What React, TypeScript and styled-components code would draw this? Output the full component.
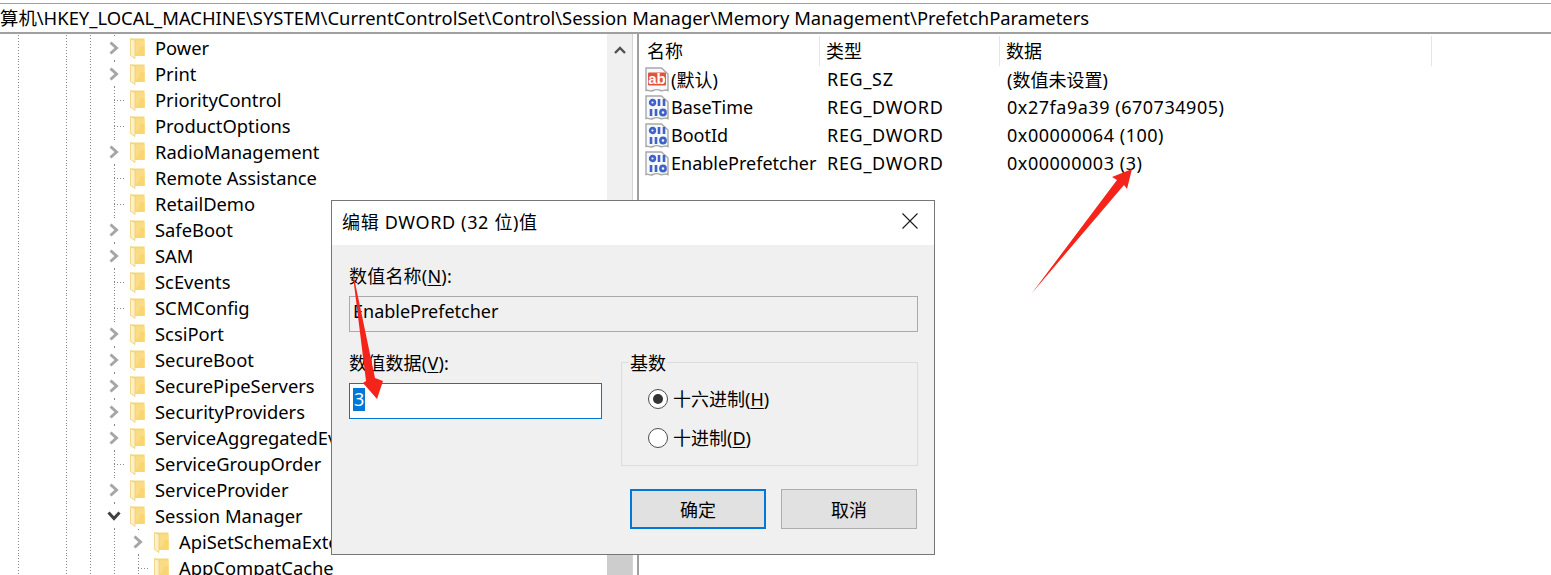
import React from "react";
import styled, { createGlobalStyle } from "styled-components";

const GlobalStyle = createGlobalStyle`
  html, body {
    margin: 0;
    padding: 0;
    background: #fff;
    overflow: hidden;
  }
  * { box-sizing: border-box; }
`;

const FONT = `"Noto Sans", "Noto Sans CJK SC", sans-serif`;

const Page = styled.div`
  position: relative;
  width: 1551px;
  height: 575px;
  overflow: hidden;
  font-family: ${FONT};
  font-size: 18px;
  color: #000;
  background: #fff;
  display: flex;
  flex-direction: column;
`;

const AddressBar = styled.div`
  height: 31px;
  margin-top: 3px;
  flex: none;
  border-top: 1px solid #a0a0a0;
  border-bottom: 2px solid #a0a0a0;
  white-space: nowrap;
  line-height: 28px;
  font-size: 18.4px;
  overflow: hidden;
`;

const Panes = styled.div`
  flex: 1;
  min-height: 0;
  display: flex;
`;

const TreePane = styled.div`
  width: 632px;
  flex: none;
  display: flex;
  overflow: hidden;
`;

const TreeList = styled.div`
  width: 607px;
  flex: none;
  padding-top: 1px;
`;

const Row = styled.div`
  height: 26px;
  display: flex;
  align-items: center;
  white-space: nowrap;
`;

const Guide = styled.div<{ $w: number }>`
  width: ${(p) => p.$w}px;
  height: 100%;
  flex: none;
  background-image: repeating-linear-gradient(to bottom, #8a8a8a 0 1px, transparent 1px 3px);
  background-size: 1px 100%;
  background-repeat: no-repeat;
`;

const Spacer = styled.div<{ $w: number }>`
  width: ${(p) => p.$w}px;
  height: 100%;
  flex: none;
`;

const Twig = styled.div<{ $line: boolean }>`
  width: 16px;
  height: 100%;
  flex: none;
  display: flex;
  align-items: center;
  background-image: ${(p) =>
    p.$line
      ? `repeating-linear-gradient(to bottom, #8a8a8a 0 1px, transparent 1px 3px), repeating-linear-gradient(to right, #8a8a8a 0 1px, transparent 1px 3px)`
      : `linear-gradient(#8a8a8a, #8a8a8a), linear-gradient(#8a8a8a, #8a8a8a)`};
  background-size: ${(p) => (p.$line ? "1px 100%, 11px 1px" : "1px 1px, 1px 1px")};
  background-position: ${(p) => (p.$line ? "0 0, 0 50%" : "0 0, 0 100%")};
  background-repeat: no-repeat;
`;

const ChevronSlot = styled.div`
  width: 24px;
  height: 100%;
  margin-left: -12px;
  flex: none;
  display: flex;
  align-items: center;
  justify-content: center;
`;

const FolderSlot = styled.div`
  width: 25px;
  flex: none;
  display: flex;
  align-items: center;
`;

const TreeLabel = styled.span`
  line-height: 26px;
  font-size: 18.35px;
`;

const ScrollTrack = styled.div`
  width: 25px;
  flex: none;
  background: #f0f0f0;
  display: flex;
  flex-direction: column;
  align-items: center;
  justify-content: space-between;
`;

const ScrollUp = styled.div`
  height: 32px;
  display: flex;
  align-items: center;
`;

const ScrollThumb = styled.div`
  width: 100%;
  height: 20px;
  background: #cdcdcd;
`;

const Splitter = styled.div`
  width: 7px;
  flex: none;
  border-left: 1px solid #d4d4d4;
  border-right: 2px solid #a0a0a0;
`;

const ListPane = styled.div`
  flex: 1;
  min-width: 0;
`;

const ListHeader = styled.div`
  height: 31px;
  padding-top: 2px;
  display: grid;
  grid-template-columns: 181px 180px 432px;
  width: 793px;
`;

const HeaderCell = styled.div`
  padding-left: 8px;
  line-height: 30px;
  border-right: 1px solid #e5e5e5;
  &:nth-child(2), &:nth-child(3) { padding-left: 6px; }
`;

const ListRow = styled.div`
  height: 28px;
  display: grid;
  grid-template-columns: 181px 180px 1fr;
  align-items: center;
  white-space: nowrap;
`;

const NameCell = styled.div`
  display: flex;
  align-items: center;
  gap: 2px;
  padding-left: 6px;
`;

const TypeCell = styled.div`
  padding-left: 7px;
  letter-spacing: 0.7px;
`;

const DataCell = styled.div<{ $plain?: boolean }>`
  padding-left: 7px;
  letter-spacing: ${(p) => (p.$plain ? 0 : "0.53px")};
`;

const Dialog = styled.div`
  position: absolute;
  left: 331px;
  top: 200px;
  width: 604px;
  height: 355px;
  border: 1px solid #767676;
  background: #f0f0f0;
  display: flex;
  flex-direction: column;
`;

const TitleBar = styled.div`
  height: 44px;
  flex: none;
  background: #fff;
  display: flex;
  align-items: center;
  justify-content: space-between;
  padding: 0 16px 4px 10px;
  letter-spacing: 0.65px;
`;

const Body = styled.div`
  padding: 21px 16px 0 17px;
`;

const FieldLabel = styled.div`
  height: 20px;
  line-height: 20px;
  margin-bottom: 10px;
  letter-spacing: 0.2px;
`;

const NameField = styled.div`
  height: 36px;
  border: 1px solid #a9a9a9;
  line-height: 28px;
  padding-left: 3px;
`;

const Lower = styled.div`
  display: grid;
  grid-template-columns: 253px 297px;
  gap: 19px;
  margin-top: 21px;
`;

const ValueColumn = styled.div``;

const ValueInput = styled.div`
  height: 36px;
  border: 1px solid #0078d7;
  background: #fff;
  padding: 3px 0 0 3px;
`;

const Selection = styled.span`
  display: inline-block;
  background: #0078d7;
  color: #fff;
  height: 23px;
  line-height: 23px;
  padding: 0 1px;
`;

const BaseGroup = styled.div`
  position: relative;
  margin-top: 9px;
  height: 104px;
  border: 1px solid #dcdcdc;
  padding: 26px 0 0 26px;
  display: flex;
  flex-direction: column;
  gap: 19px;
`;

const Legend = styled.span`
  position: absolute;
  left: 7px;
  top: -10px;
  padding: 0 1px;
  line-height: 20px;
  background: #f0f0f0;
`;

const RadioRow = styled.div`
  height: 20px;
  display: flex;
  align-items: center;
  gap: 5px;
  line-height: 20px;
`;

const Radio = styled.span<{ $on?: boolean }>`
  width: 20px;
  height: 20px;
  flex: none;
  border-radius: 50%;
  border: 1px solid #4d4d4d;
  background: #fff;
  display: flex;
  align-items: center;
  justify-content: center;
  &::after {
    content: "";
    width: 10px;
    height: 10px;
    border-radius: 50%;
    background: ${(p) => (p.$on ? "#333" : "transparent")};
  }
`;

const Buttons = styled.div`
  display: flex;
  justify-content: flex-end;
  gap: 15px;
  margin-top: 23px;
  padding-right: 1px;
`;

const Button = styled.div<{ $primary?: boolean }>`
  width: 136px;
  height: 40px;
  background: #e1e1e1;
  border: ${(p) => (p.$primary ? "2px solid #0078d7" : "1px solid #adadad")};
  display: flex;
  align-items: center;
  justify-content: center;
`;

const ArrowLayer = styled.svg`
  position: absolute;
  left: 0;
  top: 0;
  pointer-events: none;
`;

const Key = styled.span`
  text-decoration: underline;
  text-underline-offset: 2px;
  text-decoration-thickness: 1px;
`;

const ChevronRight = () => (
  <svg width="10" height="14" viewBox="0 0 10 14">
    <path d="M1.5 1.5 7.5 7 1.5 12.5" fill="none" stroke="#a6a6a6" strokeWidth="3" />
  </svg>
);

const ChevronDown = () => (
  <svg width="14" height="10" viewBox="0 0 14 10">
    <path d="M1.5 1.5 7 7.5 12.5 1.5" fill="none" stroke="#404040" strokeWidth="3" />
  </svg>
);

const Folder = () => (
  <svg width="15" height="21" viewBox="0 0 15 21">
    <path d="M1 0.5H14.5V18H5V2H1Z" fill="#f8d675" />
    <path d="M5 2.5H14.5V18H5Z" fill="#fbdc86" />
    <path d="M0.5 0.5 5 2.5V20.5L0.5 17.5Z" fill="#fdf0c4" stroke="#ecc868" strokeWidth="0.7" />
    <path d="M10 8H14.5V18H5.5V16.5C8 15 10 12 10 8Z" fill="#fad672" />
  </svg>
);

const SheetIcon = ({ children }: { children: React.ReactNode }) => (
  <svg width="24" height="25" viewBox="0 0 24 25">
    <path
      d="M1 1H16.5L23 7V23.5C20 22 18 24.5 15.5 23.5S11 22 8 23.5 3.5 22.5 1 23.5Z"
      fill="#f6f8fc"
      stroke="#a8a8a8"
      strokeWidth="1.4"
    />
    {children}
  </svg>
);

const TextValueIcon = () => (
  <SheetIcon>
    <rect x="3" y="5.5" width="18" height="13" rx="1" fill="#e2533a" />
    <text x="12" y="16.5" textAnchor="middle" fontFamily='"Liberation Sans", sans-serif' fontWeight="700" fontSize="15" fill="#fff">
      ab
    </text>
  </SheetIcon>
);

const BinaryValueIcon = () => (
  <SheetIcon>
    <g fill="none" stroke="#3e62c8" strokeWidth="2.6">
      <circle cx="7.5" cy="7.5" r="2.4" />
      <path d="M14 4v7M19 4v7" />
      <path d="M6 14v7M11 14v7" />
      <circle cx="18" cy="17.5" r="2.6" />
    </g>
  </SheetIcon>
);

const CloseIcon = () => (
  <svg width="16" height="16" viewBox="0 0 16 16">
    <path d="M.5.5 15.5 15.5M15.5.5 .5 15.5" stroke="#1a1a1a" strokeWidth="1.1" fill="none" />
  </svg>
);

const ScrollUpIcon = () => (
  <svg width="12" height="8" viewBox="0 0 12 8">
    <path d="M1 7 6 2 11 7" fill="none" stroke="#505050" strokeWidth="2.4" />
  </svg>
);

type Kind = "closed" | "leaf" | "open";

const treeRows: { name: string; kind: Kind; depth?: number }[] = [
  { name: "Power", kind: "closed" },
  { name: "Print", kind: "closed" },
  { name: "PriorityControl", kind: "leaf" },
  { name: "ProductOptions", kind: "leaf" },
  { name: "RadioManagement", kind: "closed" },
  { name: "Remote Assistance", kind: "leaf" },
  { name: "RetailDemo", kind: "leaf" },
  { name: "SafeBoot", kind: "closed" },
  { name: "SAM", kind: "closed" },
  { name: "ScEvents", kind: "leaf" },
  { name: "SCMConfig", kind: "leaf" },
  { name: "ScsiPort", kind: "closed" },
  { name: "SecureBoot", kind: "closed" },
  { name: "SecurePipeServers", kind: "closed" },
  { name: "SecurityProviders", kind: "closed" },
  { name: "ServiceAggregatedEvents", kind: "closed" },
  { name: "ServiceGroupOrder", kind: "leaf" },
  { name: "ServiceProvider", kind: "closed" },
  { name: "Session Manager", kind: "open" },
  { name: "ApiSetSchemaExtensions", kind: "closed", depth: 1 },
  { name: "AppCompatCache", kind: "leaf", depth: 1 },
];

const values = [
  { name: "(默认)", type: "REG_SZ", data: "(数值未设置)", text: true },
  { name: "BaseTime", type: "REG_DWORD", data: "0x27fa9a39 (670734905)" },
  { name: "BootId", type: "REG_DWORD", data: "0x00000064 (100)" },
  { name: "EnablePrefetcher", type: "REG_DWORD", data: "0x00000003 (3)" },
];

const TreeRow = ({ name, kind, depth = 0 }: { name: string; kind: Kind; depth?: number }) => (
  <Row>
    <Spacer $w={18} />
    <Guide $w={48} />
    <Guide $w={24} />
    <Guide $w={24} />
    {depth > 0 && <Guide $w={24} />}
    <Twig $line={kind === "leaf"}>
      {kind !== "leaf" && (
        <ChevronSlot>{kind === "open" ? <ChevronDown /> : <ChevronRight />}</ChevronSlot>
      )}
    </Twig>
    <FolderSlot>
      <Folder />
    </FolderSlot>
    <TreeLabel>{name}</TreeLabel>
  </Row>
);

export default function App() {
  return (
    <>
      <GlobalStyle />
      <Page>
        <AddressBar>算机\HKEY_LOCAL_MACHINE\SYSTEM\CurrentControlSet\Control\Session Manager\Memory Management\PrefetchParameters</AddressBar>
        <Panes>
          <TreePane>
            <TreeList>
              {treeRows.map((r) => (
                <TreeRow key={r.name} {...r} />
              ))}
            </TreeList>
            <ScrollTrack>
              <ScrollUp>
                <ScrollUpIcon />
              </ScrollUp>
              <ScrollThumb />
            </ScrollTrack>
          </TreePane>
          <Splitter />
          <ListPane>
            <ListHeader>
              <HeaderCell>名称</HeaderCell>
              <HeaderCell>类型</HeaderCell>
              <HeaderCell>数据</HeaderCell>
            </ListHeader>
            {values.map((v) => (
              <ListRow key={v.name}>
                <NameCell>
                  {v.text ? <TextValueIcon /> : <BinaryValueIcon />}
                  {v.name}
                </NameCell>
                <TypeCell>{v.type}</TypeCell>
                <DataCell $plain={v.text}>{v.data}</DataCell>
              </ListRow>
            ))}
          </ListPane>
        </Panes>

        <Dialog>
          <TitleBar>
            编辑 DWORD (32 位)值
            <CloseIcon />
          </TitleBar>
          <Body>
            <FieldLabel>
              数值名称(<Key>N</Key>):
            </FieldLabel>
            <NameField>EnablePrefetcher</NameField>
            <Lower>
              <ValueColumn>
                <FieldLabel>
                  数值数据(<Key>V</Key>):
                </FieldLabel>
                <ValueInput>
                  <Selection>3</Selection>
                </ValueInput>
              </ValueColumn>
              <BaseGroup>
                <Legend>基数</Legend>
                <RadioRow>
                  <Radio $on />
                  <span>
                    十六进制(<Key>H</Key>)
                  </span>
                </RadioRow>
                <RadioRow>
                  <Radio />
                  <span>
                    十进制(<Key>D</Key>)
                  </span>
                </RadioRow>
              </BaseGroup>
            </Lower>
            <Buttons>
              <Button $primary>确定</Button>
              <Button>取消</Button>
            </Buttons>
          </Body>
        </Dialog>

        <ArrowLayer width="1551" height="575" viewBox="0 0 1551 575">
          <polygon points="1032,293 1117,180 1112,177 1132,169 1127,189 1124,185" fill="#f5241a" />
          <polygon points="352,268 375,378 383,381 377,399 363,383 366,381" fill="#f5241a" />
        </ArrowLayer>
      </Page>
    </>
  );
}
